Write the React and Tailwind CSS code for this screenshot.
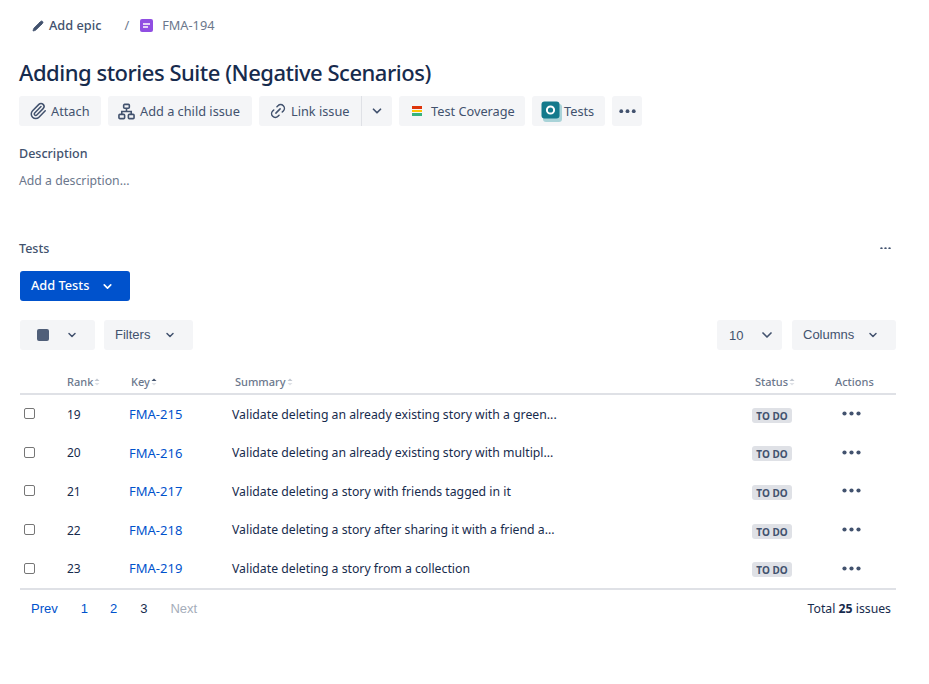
import { ChevronDown, Paperclip, Link2, Pencil } from 'lucide-react'

const ROWS = [
  { rank: 19, key: 'FMA-215', summary: 'Validate deleting an already existing story with a green...' },
  { rank: 20, key: 'FMA-216', summary: 'Validate deleting an already existing story with multipl...' },
  { rank: 21, key: 'FMA-217', summary: 'Validate deleting a story with friends tagged in it' },
  { rank: 22, key: 'FMA-218', summary: 'Validate deleting a story after sharing it with a friend a...' },
  { rank: 23, key: 'FMA-219', summary: 'Validate deleting a story from a collection' },
]

function Dots({ className = 'w-[19px]' }) {
  return (
    <svg viewBox="0 0 19 5" className={className} fill="currentColor">
      <circle cx="2.5" cy="2.5" r="2.1" />
      <circle cx="9.5" cy="2.5" r="2.1" />
      <circle cx="16.5" cy="2.5" r="2.1" />
    </svg>
  )
}

function Sort({ up = false }) {
  return (
    <svg viewBox="0 0 6 8" className="w-[6px] h-[8px] ml-[1px]">
      <path d="M3 0.5 L5.5 3 H0.5 Z" fill={up ? '#42526e' : '#c1c7d0'} />
      <path d="M3 7.5 L5.5 5 H0.5 Z" fill="#dfe1e6" />
    </svg>
  )
}

function ChildIcon() {
  return (
    <svg viewBox="0 0 18 18" className="w-[17px] h-[17px]" fill="none" stroke="currentColor" strokeWidth="1.7">
      <rect x="6" y="1.5" width="6" height="4" rx="1" />
      <rect x="1" y="12" width="6" height="4.5" rx="1" />
      <rect x="11" y="12" width="6" height="4.5" rx="1" />
      <path d="M9 5.5 V9 M4 12 V9 H14 V12" />
    </svg>
  )
}

function ActionButton({ children, className = '' }) {
  return (
    <div className={`h-[30px] bg-[#f4f5f7] rounded-[3px] flex items-center whitespace-nowrap text-[#42526e] text-[12.75px] ${className}`}>
      {children}
    </div>
  )
}

export default function App() {
  return (
    <div
      className="min-h-[684px] bg-white pl-[20px] pr-[33px] text-[#172b4d]"
      style={{ fontFamily: '"Noto Sans", sans-serif' }}
    >
      {/* Breadcrumb */}
      <div className="h-[50px] pt-[2px] flex items-center text-[12.75px] text-[#6b778c]">
        <Pencil className="w-[12px] h-[12px] ml-[12px] text-[#42526e]" fill="currentColor" strokeWidth={1.5} />
        <span className="ml-[5px] font-medium text-[#42526e]">Add epic</span>
        <span className="ml-[23px]">/</span>
        <div className="ml-[11px] w-[13px] h-[13px] mb-[2px] rounded-[2px] bg-[#904ee2] flex flex-col justify-center pl-[3px] gap-[1px]">
          <div className="w-[7px] h-[2px] bg-[#e3d2f7]" />
          <div className="w-[5px] h-[2px] bg-[#e3d2f7]" />
        </div>
        <span className="ml-[9px]">FMA-194</span>
      </div>

      <h1 className="text-[22px] leading-[28px] h-[46px] pt-[8px] font-medium tracking-[-0.48px] text-[#172b4d] -ml-[1px]">
        Adding stories Suite (Negative Scenarios)
      </h1>

      {/* Action buttons */}
      <div className="flex items-center gap-[7px] -ml-[1px]">
        <ActionButton className="w-[82px] pl-[10px] gap-[4px]">
          <Paperclip className="w-[18px] h-[18px]" strokeWidth={2} />
          <span className="pt-[1px]">Attach</span>
        </ActionButton>
        <ActionButton className="w-[144px] pl-[10px] gap-[5px]">
          <ChildIcon />
          <span className="pt-[1px]">Add a child issue</span>
        </ActionButton>
        <ActionButton className="w-[133px] pl-[10px] gap-[4px]">
          <Link2 className="w-[18px] h-[18px] -rotate-45" strokeWidth={2} />
          <span className="pt-[1px]">Link issue</span>
          <div className="ml-[7px] h-[30px] border-l border-[#dfe1e6] flex items-center pl-[8px]">
            <ChevronDown className="w-[14px] h-[14px]" strokeWidth={3} />
          </div>
        </ActionButton>
        <ActionButton className="w-[126px] pl-[13px] gap-[9px]">
          <div className="w-[10px] flex flex-col gap-[1px]">
            <div className="h-[2.5px] bg-[#de350b]" />
            <div className="h-[2.5px] bg-[#ffc400]" />
            <div className="h-[2.5px] bg-[#36b37e]" />
          </div>
          <span className="pt-[1px]">Test Coverage</span>
        </ActionButton>
        <ActionButton className="w-[73px] pl-[9px] gap-[2px]">
          <svg viewBox="0 0 21 21" className="w-[21px] h-[21px]">
            <rect x="2" y="3" width="19" height="18" rx="3" fill="#a9d3d8" />
            <rect x="0.5" y="0.5" width="18" height="17" rx="3" fill="#147a8c" />
            <circle cx="9.5" cy="9" r="3.6" fill="none" stroke="#ffffff" strokeWidth="2" />
          </svg>
          <span className="pt-[1px]">Tests</span>
        </ActionButton>
        <ActionButton className="w-[30px] justify-center">
          <Dots className="w-[17px]" />
        </ActionButton>
      </div>

      {/* Description */}
      <div className="mt-[18px] -ml-[1px] text-[12.5px] leading-[20px] font-medium text-[#42526e]">Description</div>
      <div className="mt-[7px] -ml-[1px] text-[12.25px] leading-[20px] text-[#6b778c]">Add a description...</div>

      {/* Tests */}
      <div className="mt-[48px] flex items-center justify-between h-[20px] pr-[5px]">
        <span className="text-[12.5px] -ml-[1px] font-medium text-[#42526e]">Tests</span>
        <Dots className="w-[11px] mb-[2px] text-[#42526e]" />
      </div>

      <div className="mt-[12px] w-[110px] h-[30px] bg-[#0052cc] rounded-[3px] flex items-center pl-[11px] text-white text-[12.75px] font-medium">
        <span className="pb-[1px]">Add Tests</span>
        <ChevronDown className="ml-[12px] w-[13px] h-[13px]" strokeWidth={3} />
      </div>

      {/* Toolbar */}
      <div className="mt-[19px] flex items-center justify-between">
        <div className="flex gap-[9px]">
          <div className="w-[75px] h-[30px] bg-[#f4f5f7] rounded-[3px] flex items-center pl-[17px] text-[#42526e]">
            <div className="w-[12px] h-[12px] rounded-[2px] bg-[#505f79]" />
            <ChevronDown className="ml-[17px] w-[12px] h-[12px]" strokeWidth={3} />
          </div>
          <div className="w-[89px] h-[30px] bg-[#f4f5f7] rounded-[3px] flex items-center pl-[11px] text-[#42526e] text-[13px]" style={{ fontFamily: '"Liberation Sans", sans-serif' }}>
            <span className="pb-[1px]">Filters</span>
            <ChevronDown className="ml-[14px] w-[12px] h-[12px]" strokeWidth={3} />
          </div>
        </div>
        <div className="flex gap-[10px]">
          <div className="w-[65px] h-[30px] bg-[#f4f5f7] rounded-[3px] flex items-center pl-[12px] text-[#42526e] text-[13px]" style={{ fontFamily: '"Liberation Sans", sans-serif' }}>
            <span className="pt-[2px]">10</span>
            <ChevronDown className="ml-[16px] w-[16px] h-[16px]" strokeWidth={2.5} />
          </div>
          <div className="w-[104px] h-[30px] bg-[#f4f5f7] rounded-[3px] flex items-center pl-[11px] text-[#42526e] text-[13px]" style={{ fontFamily: '"Liberation Sans", sans-serif' }}>
            <span className="pb-[1px]">Columns</span>
            <ChevronDown className="ml-[13px] w-[12px] h-[12px]" strokeWidth={3} />
          </div>
        </div>
      </div>

      {/* Table */}
      <div className="mt-[21px] border-b-2 border-[#dfe1e6]">
        <div className="grid grid-cols-[47px_64px_104px_520px_80px_1fr] h-[24px] pb-[1px] border-b-2 border-[#dfe1e6] text-[11px] font-medium text-[#6b778c] leading-[22px]">
          <div />
          <div className="flex items-center"><span>Rank</span><Sort /></div>
          <div className="flex items-center"><span>Key</span><Sort up /></div>
          <div className="flex items-center"><span>Summary</span><Sort /></div>
          <div className="flex items-center"><span>Status</span><Sort /></div>
          <div className="flex items-center"><span>Actions</span></div>
        </div>
        {ROWS.map((row) => (
          <div key={row.key} className="grid grid-cols-[47px_62px_103px_520px_83px_1fr] h-[38.6px] pt-[1px] items-center text-[12.25px] text-[#172b4d]">
            <div className="pl-[4px]">
              <div className="w-[11px] h-[11px] border border-[#767676] rounded-[2px] mb-[2px]" />
            </div>
            <div className="text-[12px]">{row.rank}</div>
            <div className="text-[13px] text-[#0052cc]">{row.key}</div>
            <div>{row.summary}</div>
            <div className="flex items-center pt-[1px]">
              <span className="h-[15px] leading-[16px] w-[40px] text-center bg-[#dfe1e6] rounded-[3px] text-[10px] font-bold text-[#42526e]">TO DO</span>
            </div>
            <div className="pl-[7px] text-[#42526e]">
              <div className="mb-[2px]"><Dots className="w-[19px]" /></div>
            </div>
          </div>
        ))}
      </div>

      {/* Pagination */}
      <div className="flex items-center justify-between h-[38px] pr-[5px]" style={{ fontFamily: '"Liberation Sans", sans-serif' }}>
        <div className="flex items-center text-[13px] text-[#0052cc]">
          <span className="ml-[11px]">Prev</span>
          <span className="ml-[23px]">1</span>
          <span className="ml-[22px]">2</span>
          <span className="ml-[23px] text-[#172b4d]">3</span>
          <span className="ml-[23px] text-[#a5adba]">Next</span>
        </div>
        <div className="text-[12.25px] text-[#172b4d]" style={{ fontFamily: '"Noto Sans", sans-serif' }}>
          Total <b className="font-bold">25</b> issues
        </div>
      </div>
    </div>
  )
}
